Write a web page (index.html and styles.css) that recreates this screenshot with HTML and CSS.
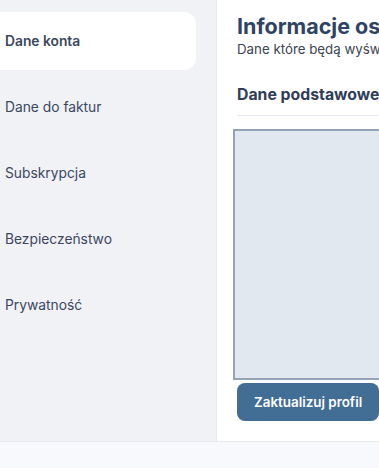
FILE: index.html
```html
<!DOCTYPE html>
<html lang="pl">
<head>
  <meta charset="UTF-8" />
  <meta name="viewport" content="width=device-width, initial-scale=1.0"/>
  <title>Ustawienia konta</title>
  <link rel="stylesheet" href="styles.css">
</head>
<body>

  <div class="layout">
    <!-- Sidebar -->
    <div class="sidebar">
      <div class="nav-item active">Dane konta</div>
      <div class="nav-item">Dane do faktur</div>
      <div class="nav-item">Subskrypcja</div>
      <div class="nav-item">Bezpieczeństwo</div>
      <div class="nav-item">Prywatność</div>
    </div>

    <!-- Content -->
    <div class="content">
      <div class="title">Informacje osobiste</div>
      <div class="subtitle">Dane które będą wyświetlane na Twoim profilu</div>

      <div class="section-title">Dane podstawowe</div>

      <div class="photo-box"></div>

      <button class="update-btn">Zaktualizuj profil</button>
    </div>
  </div>

  <div class="footer"></div>

</body>
</html>
```

FILE: styles.css
```css
body {
  font-family: Inter, "Noto Sans", sans-serif;
  margin: 0;
  padding: 0;
  background-color: #f8f9fc;
  overflow: hidden;
}

.layout {
  display: flex;
  height: 441px;
  border-bottom: 1px solid #e6e9ef;
}

.sidebar {
  width: 216px;
  flex-shrink: 0;
  background-color: #f0f2f6;
  padding: 12px 20px 0 0;
  box-sizing: border-box;
  display: flex;
  flex-direction: column;
  gap: 8px;
}

.nav-item {
  height: 58px;
  display: flex;
  align-items: center;
  padding-left: 5px;
  font-size: 13.8px;
  color: #3b475e;
  border-radius: 0 12px 12px 0;
  white-space: nowrap;
}

.nav-item.active {
  background-color: white;
  font-weight: 600;
}

.content {
  flex: 1;
  background-color: white;
  border-left: 1px solid #e6e9ef;
  padding: 14px 0 0 20px;
  white-space: nowrap;
  overflow: hidden;
  min-width: 0;
}

.title {
  font-size: 21.5px;
  font-weight: 700;
  color: #2f4464;
  line-height: 24px;
}

.subtitle {
  font-size: 13.3px;
  color: #3d4452;
  margin-top: 3px;
  line-height: 16px;
}

.section-title {
  font-size: 15.8px;
  font-weight: 700;
  color: #2f3d57;
  margin-top: 28px;
  line-height: 20px;
  padding-bottom: 10px;
  border-bottom: 1px solid #e5e9ef;
}

.photo-box {
  margin: 13px 0 0 -4px;
  width: 160px;
  height: 251px;
  background-color: #e1e8f0;
  border: 2px solid #94a3b8;
  box-sizing: border-box;
}

.update-btn {
  display: block;
  margin-top: 3px;
  height: 38px;
  padding: 0 17px;
  background-color: #426d94;
  color: white;
  border: none;
  border-radius: 8px;
  font-family: inherit;
  font-size: 13.4px;
  font-weight: 600;
  cursor: pointer;
}

.footer {
  height: 26px;
}
```
